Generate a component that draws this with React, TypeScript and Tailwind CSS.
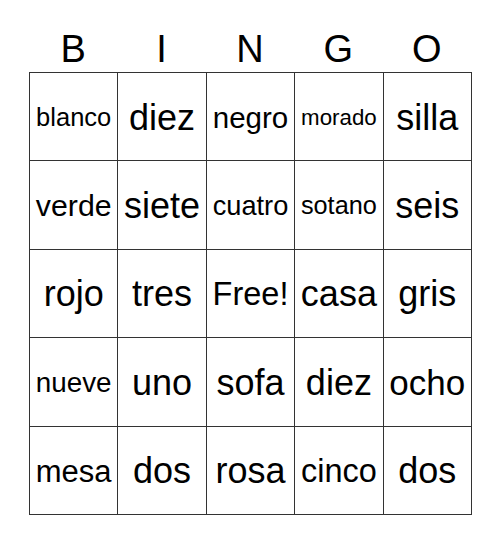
import React from 'react';

// size is the font size in px, fitted to the cell width (max 36)
const cells: { word: string; size: string }[] = [
  { word: 'blanco', size: 'text-[25.5px]' },
  { word: 'diez', size: 'text-[36px]' },
  { word: 'negro', size: 'text-[29.5px]' },
  { word: 'morado', size: 'text-[22.3px]' },
  { word: 'silla', size: 'text-[36px]' },
  { word: 'verde', size: 'text-[30.3px]' },
  { word: 'siete', size: 'text-[36px]' },
  { word: 'cuatro', size: 'text-[27.2px]' },
  { word: 'sotano', size: 'text-[25.3px]' },
  { word: 'seis', size: 'text-[36px]' },
  { word: 'rojo', size: 'text-[36px]' },
  { word: 'tres', size: 'text-[36px]' },
  { word: 'Free!', size: 'text-[32.5px]' },
  { word: 'casa', size: 'text-[36px]' },
  { word: 'gris', size: 'text-[36px]' },
  { word: 'nueve', size: 'text-[27.8px]' },
  { word: 'uno', size: 'text-[36px]' },
  { word: 'sofa', size: 'text-[36px]' },
  { word: 'diez', size: 'text-[36px]' },
  { word: 'ocho', size: 'text-[35px]' },
  { word: 'mesa', size: 'text-[31px]' },
  { word: 'dos', size: 'text-[36px]' },
  { word: 'rosa', size: 'text-[36px]' },
  { word: 'cinco', size: 'text-[32.5px]' },
  { word: 'dos', size: 'text-[36px]' },
];

const App: React.FC = () => {
  return (
    <div className="w-[500px] h-[544px] bg-white pt-[30px] font-['Liberation_Sans',Arial,sans-serif] text-black">
      {/* Header letters */}
      <div className="ml-[29px] w-[442px] h-[42px] grid grid-cols-5">
        {['B', 'I', 'N', 'G', 'O'].map((letter) => (
          <div key={letter} className="text-center text-[38px] leading-[38px]">
            {letter}
          </div>
        ))}
      </div>

      {/* Card */}
      <div className="ml-[29px] w-[443px] grid grid-cols-5 border-l border-t border-[#333]">
        {cells.map((cell, index) => (
          <div
            key={index}
            className="h-[88.4px] pt-[2px] flex items-center justify-center border-r border-b border-[#333] overflow-hidden whitespace-nowrap"
          >
            <span className={`${cell.size} leading-none`}>{cell.word}</span>
          </div>
        ))}
      </div>
    </div>
  );
};

export default App;
